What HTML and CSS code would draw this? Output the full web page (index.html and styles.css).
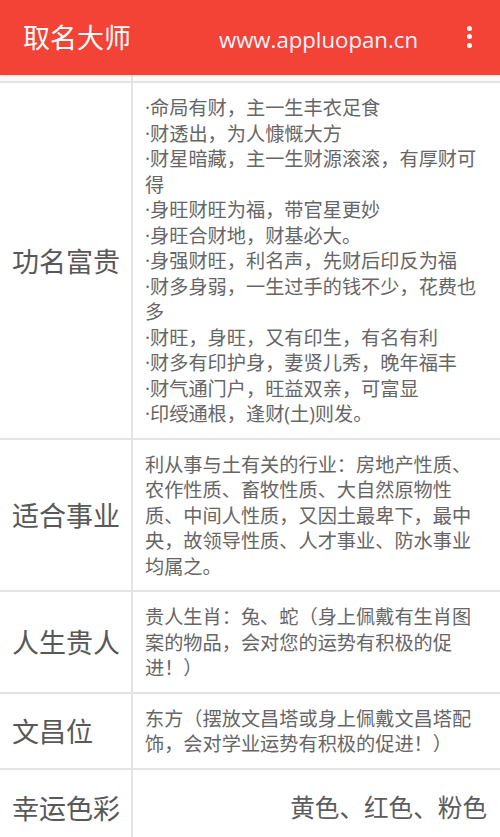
FILE: index.html
```html
<!DOCTYPE html>
<html lang="zh-CN">
<head>
<meta charset="utf-8">
<title>取名大师</title>
<link rel="stylesheet" href="styles.css">
</head>
<body>
<header class="appbar">
  <div class="title">取名大师</div>
  <div class="url">www.appluopan.cn</div>
  <div class="menu" aria-label="更多">
    <span class="dot"></span><span class="dot"></span><span class="dot"></span>
  </div>
</header>
<main class="table">
  <div class="row row-stub">
    <div class="label"></div>
    <div class="value"></div>
  </div>
  <div class="row">
    <div class="label">功名富贵</div>
    <div class="value">·命局有财，主一生丰衣足食<br>·财透出，为人慷慨大方<br>·财星暗藏，主一生财源滚滚，有厚财可得<br>·身旺财旺为福，带官星更妙<br>·身旺合财地，财基必大。<br>·身强财旺，利名声，先财后印反为福<br>·财多身弱，一生过手的钱不少，花费也多<br>·财旺，身旺，又有印生，有名有利<br>·财多有印护身，妻贤儿秀，晚年福丰<br>·财气通门户，旺益双亲，可富显<br>·印绶通根，逢财(土)则发。</div>
  </div>
  <div class="row">
    <div class="label">适合事业</div>
    <div class="value">利从事与土有关的行业：房地产性质、农作性质、畜牧性质、大自然原物性质、中间人性质，又因土最卑下，最中央，故领导性质、人才事业、防水事业均属之。</div>
  </div>
  <div class="row">
    <div class="label">人生贵人</div>
    <div class="value">贵人生肖：兔、蛇（身上佩戴有生肖图案的物品，会对您的运势有积极的促进！）</div>
  </div>
  <div class="row">
    <div class="label">文昌位</div>
    <div class="value">东方（摆放文昌塔或身上佩戴文昌塔配饰，会对学业运势有积极的促进！）</div>
  </div>
  <div class="row row-last">
    <div class="label">幸运色彩</div>
    <div class="value value-big">黄色、红色、粉色</div>
  </div>
</main>
</body>
</html>
```

FILE: styles.css
```css
html, body {
  margin: 0;
  padding: 0;
  background: #ffffff;
}

body {
  font-family: "Noto Sans CJK SC", sans-serif;
  width: 500px;
  overflow: hidden;
  text-spacing-trim: space-all;
}

.appbar {
  height: 75px;
  background: #f34336;
  display: flex;
  align-items: center;
  color: #ffffff;
  box-shadow: 0 1px 2px rgba(0, 0, 0, 0.12);
  position: relative;
  z-index: 1;
}

.title {
  font-family: "Noto Sans CJK SC", sans-serif;
  font-size: 27px;
  padding-left: 23px;
  padding-bottom: 2px;
}

.url {
  margin-left: auto;
  margin-right: 49px;
  font-family: "Open Sans", sans-serif;
  font-size: 22.2px;
  color: #f4f4ff;
  padding-top: 3px;
}

.menu {
  display: flex;
  flex-direction: column;
  align-items: center;
  gap: 3.5px;
  margin-right: 28px;
  padding-bottom: 2px;
}

.dot {
  width: 5px;
  height: 5px;
  border-radius: 50%;
  background: #ffffff;
}

.table {
  display: flex;
  flex-direction: column;
}

.row {
  display: grid;
  grid-template-columns: 133px 1fr;
  border-bottom: 2px solid #e4e4e4;
}

.row-stub {
  height: 6px;
  background: #fafafa;
}

.label {
  border-right: 2px solid #e4e4e4;
  display: flex;
  align-items: center;
  padding-left: 12px;
  font-size: 27px;
  color: #585858;
}

.value {
  padding: 12px 14px 11px 12px;
  font-family: "Open Sans", "Noto Sans CJK SC", sans-serif;
  font-size: 19.2px;
  line-height: 25.5px;
  color: #666666;
}

.row-last {
  min-height: 76px;
  border-bottom: none;
}

.value-big {
  font-family: "Noto Sans CJK SC", sans-serif;
  font-size: 24.6px;
  line-height: 30px;
  color: #5c5c5c;
  padding: 0 13px 4px 12px;
  display: flex;
  align-items: center;
  justify-content: flex-end;
}
```
